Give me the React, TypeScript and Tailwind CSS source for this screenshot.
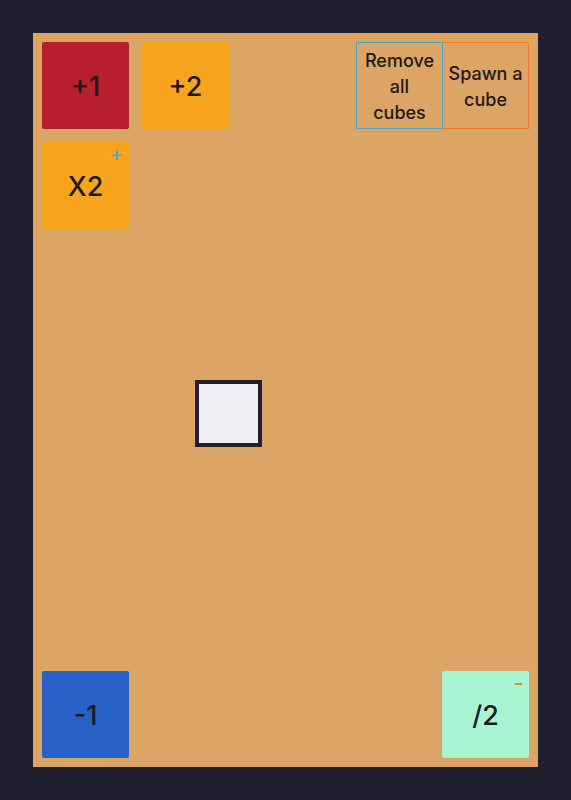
import React from "react";

const font = { fontFamily: 'Inter, "Noto Sans", sans-serif' };

function Tile({
  label,
  className,
  mark,
}: {
  label: string;
  className: string;
  mark?: React.ReactNode;
}) {
  return (
    <button
      type="button"
      className={`relative flex h-[87px] w-[87px] items-center justify-center rounded-[2px] pt-[4px] text-[27px] font-medium text-[#1c1a1a] ${className}`}
    >
      {label}
      {mark}
    </button>
  );
}

export default function App() {
  return (
    <div className="min-h-screen bg-[#22202f] p-[33px]" style={font}>
      <div className="relative flex h-[734px] flex-col justify-between bg-[#dca465] p-[9px]">
        <div className="flex items-start justify-between">
          <div className="grid grid-cols-2 gap-[13px]">
            <Tile label="+1" className="bg-[#b81f2c]" />
            <Tile label="+2" className="bg-[#f8a41e]" />
            <Tile
              label="X2"
              className="bg-[#f8a41e]"
              mark={
                <span className="absolute right-[6px] top-[2px] text-[20px] font-normal leading-none text-[#45a8d0]">
                  +
                </span>
              }
            />
          </div>
          <div className="flex">
            <button
              type="button"
              className="flex h-[87px] w-[87px] items-center justify-center border border-[#4aa3c9] pt-[2px] text-center text-[18px] font-medium leading-[26px] text-[#1c1a1a]"
            >
              Remove
              <br />
              all
              <br />
              cubes
            </button>
            <button
              type="button"
              className="flex h-[87px] w-[86px] items-center justify-center border border-l-0 border-[#f47a20] pt-[2px] text-center text-[18px] font-medium leading-[26px] text-[#1c1a1a]"
            >
              Spawn a
              <br />
              cube
            </button>
          </div>
        </div>

        <div className="flex items-end justify-between">
          <Tile label="-1" className="bg-[#2862c6]" />
          <Tile
            label="/2"
            className="bg-[#a8f5d4]"
            mark={
              <span className="absolute right-[7px] top-[12px] h-[2px] w-[7px] bg-[#f0822a]" />
            }
          />
        </div>

        <div className="absolute left-[162px] top-[347px] h-[67px] w-[67px] border-[4px] border-[#24212f] bg-[#efeff5]" />
      </div>
    </div>
  );
}
